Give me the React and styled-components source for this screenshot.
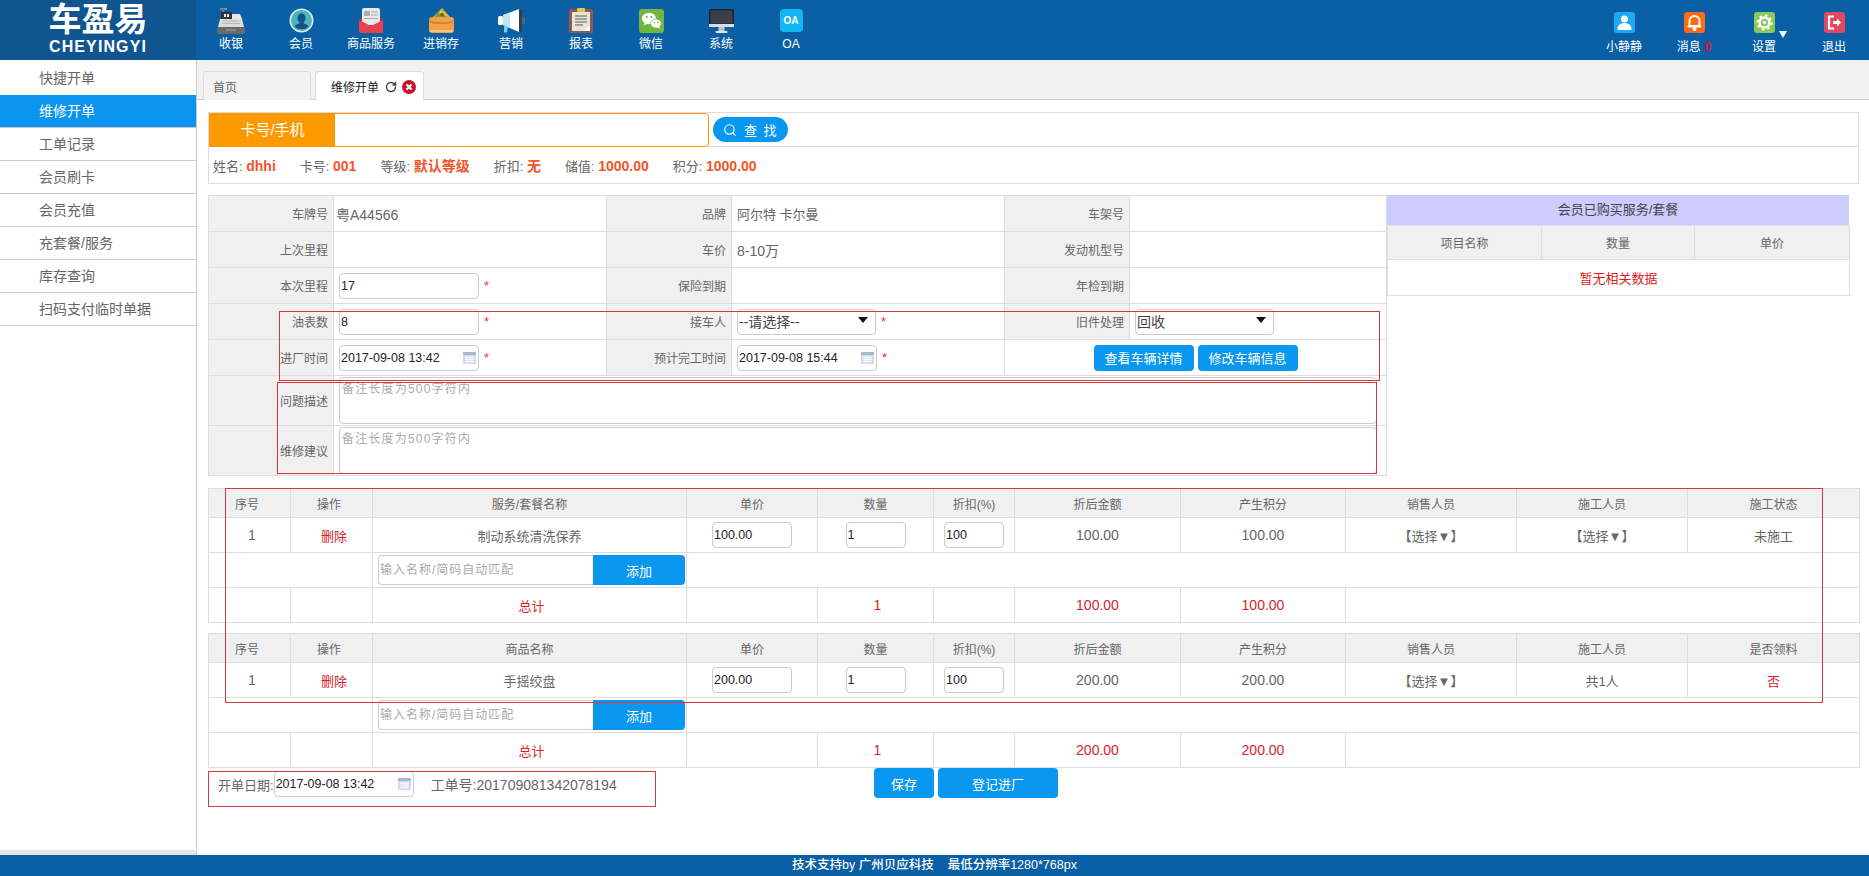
import React from 'react';
import styled, { createGlobalStyle } from 'styled-components';
import { Search, RotateCw } from 'lucide-react';

const GlobalStyle = createGlobalStyle`
  html, body { margin: 0; padding: 0; height: 100%; background: #fff; }
  body {
    font-family: "Liberation Sans", "Noto Sans CJK SC", sans-serif;
    font-size: 12px;
    color: #666;
    overflow: hidden;
  }
  input, textarea, select, button { font-family: inherit; }
`;

const Page = styled.div`
  position: relative;
  display: flex;
  flex-direction: column;
  width: 1869px;
  height: 876px;
`;

const Header = styled.header`
  display: flex;
  height: 60px;
  flex-shrink: 0;
  background: #0b5fa4;
  color: #fff;
`;

const Logo = styled.div`
  width: 196px;
  background: #10558f;
  display: flex;
  flex-direction: column;
  align-items: center;
  padding-top: 1px;
  box-sizing: border-box;
`;

const LogoCn = styled.div`
  font-size: 33px;
  line-height: 38px;
  font-weight: 700;
`;

const LogoEn = styled.div`
  font-size: 16px;
  line-height: 16px;
  font-weight: 700;
  letter-spacing: 1.1px;
`;

const Nav = styled.nav`
  display: flex;
  flex: 1;
`;

const NavItem = styled.div`
  width: 70px;
  display: flex;
  flex-direction: column;
  align-items: center;
`;

const NavIcon = styled.div`
  height: 25px;
  margin-top: 8px;
  display: flex;
  align-items: center;
  justify-content: center;
`;

const NavLabel = styled.div`
  margin-top: 3px;
  line-height: 16px;
  white-space: nowrap;
`;

const UserNav = styled.div`
  display: flex;
`;

const UserItem = styled.div`
  position: relative;
  width: 70px;
  display: flex;
  flex-direction: column;
  align-items: center;
`;

const UserIcon = styled.div`
  width: 21px;
  height: 21px;
  margin-top: 12px;
  border-radius: 3px;
  background: ${p => p.$bg};
  display: flex;
  align-items: center;
  justify-content: center;
`;

const UserLabel = styled.div`
  margin-top: 6px;
  line-height: 16px;
  white-space: nowrap;
`;

const Badge = styled.b`
  color: #e0103a;
  margin-left: 4px;
`;

const Caret = styled.span`
  position: absolute;
  left: 50px;
  top: 31px;
  width: 0;
  height: 0;
  border-left: 4px solid transparent;
  border-right: 4px solid transparent;
  border-top: 7px solid #fff;
`;

const OaIcon = styled.div`
  width: 23px;
  height: 23px;
  border-radius: 4px;
  background: #13b5f2;
  color: #fff;
  font-size: 10px;
  font-weight: 700;
  text-align: center;
  line-height: 23px;
`;

const Body = styled.div`
  display: flex;
  flex: 1;
  min-height: 0;
`;

const Sidebar = styled.aside`
  width: 197px;
  box-sizing: border-box;
  border-right: 1px solid #ccc;
  padding-top: 2px;
  display: flex;
  flex-direction: column;
  flex-shrink: 0;
`;

const SideItem = styled.div`
  height: 33px;
  box-sizing: border-box;
  padding-left: 39px;
  line-height: 32px;
  font-size: 14px;
  color: ${p => (p.$active ? '#fff' : '#666')};
  background: ${p => (p.$active ? '#0a94f0' : '#fff')};
  border-bottom: 1px solid ${p => (p.$plain ? 'transparent' : '#ccc')};
`;

const SideFoot = styled.div`
  margin-top: auto;
  height: 5px;
  background: #e6e6e6;
`;

const Main = styled.main`
  flex: 1;
  min-width: 0;
`;

const TabBar = styled.div`
  height: 40px;
  box-sizing: border-box;
  background: #f2f2f2;
  border-bottom: 1px solid #ccc;
  padding: 11px 0 0 6px;
  display: flex;
  gap: 4px;
`;

const Tab = styled.div`
  width: ${p => (p.$active ? '109px' : '108px')};
  height: ${p => (p.$active ? '30px' : '29px')};
  box-sizing: border-box;
  border: 1px solid #ddd;
  border-bottom: 0;
  border-radius: 4px 4px 0 0;
  background: ${p => (p.$active ? '#fff' : '#f2f2f2')};
  color: ${p => (p.$active ? '#222' : '#666')};
  padding-left: ${p => (p.$active ? '15px' : '9px')};
  display: flex;
  align-items: center;
`;

const TabRefresh = styled(RotateCw)`
  margin-left: 6px;
  color: #444;
`;

const TabClose = styled.svg`
  margin-left: 5px;
`;

const Content = styled.div`
  padding: 12px 10px 0 11px;
`;

const SearchRow = styled.div`
  display: flex;
  align-items: center;
  height: 35px;
  border: 1px solid #ddd;
  box-sizing: border-box;
`;

const SearchBox = styled.div`
  display: flex;
  width: 500px;
  height: 34px;
  box-sizing: border-box;
  border: 1px solid #f90;
  border-radius: 0 4px 4px 0;
`;

const SearchLabel = styled.div`
  width: 125px;
  background: #f90;
  color: #fff;
  font-size: 15px;
  text-align: center;
  line-height: 32px;
`;

const SearchInput = styled.input`
  flex: 1;
  border: 0;
  outline: none;
  background: transparent;
  min-width: 0;
`;

const SearchBtn = styled.button`
  margin-left: 4px;
  width: 75px;
  height: 25px;
  border: 0;
  border-radius: 13px;
  background: #0a97f0;
  color: #fff;
  font-size: 13px;
  letter-spacing: 1.5px;
  display: flex;
  align-items: center;
  justify-content: center;
  gap: 7px;
  padding: 0;
`;

const InfoRow = styled.div`
  display: flex;
  gap: 24px;
  height: 37px;
  box-sizing: border-box;
  align-items: center;
  padding-left: 4px;
  border: 1px solid #ddd;
  border-top: 0;
  font-size: 13px;
`;

const InfoValue = styled.b`
  color: #f0562a;
  font-size: 14px;
`;

const FormSection = styled.section`
  display: flex;
  margin-top: 11px;
  align-items: flex-start;
`;

const Table = styled.table`
  border-collapse: collapse;
  table-layout: fixed;
  width: ${p => p.$w}px;
  flex-shrink: 0;
  margin-top: ${p => p.$mt || 0}px;
  td, th { border: 1px solid #ddd; padding: 0; box-sizing: border-box; }
`;

const Col = styled.col`
  width: ${p => p.$w}px;
`;

const Row = styled.tr`
  height: ${p => p.$h}px;
`;

const LabelCell = styled.td`
  background: #f0f0f0;
  text-align: right;
  padding-right: 5px !important;
  color: #666;
`;

const ValueCell = styled.td`
  padding-left: ${p => p.$pl || 5}px !important;
  font-size: ${p => p.$fs || 13}px;
  color: #666;
`;

const ActionCell = styled.td`
  text-align: center;
`;

const Field = styled.div`
  position: relative;
  display: inline-block;
  vertical-align: middle;
`;

const TextInput = styled.input`
  width: ${p => p.$w}px;
  height: 26px;
  box-sizing: border-box;
  border: 1px solid #ccc;
  border-radius: 4px;
  padding: 0 1px;
  font-size: 12.5px;
  color: #222;
  background: #fff;
  outline: none;
  vertical-align: middle;
`;

const CalendarIcon = styled.svg`
  position: absolute;
  right: 3px;
  top: 7px;
`;

const Star = styled.span`
  color: #e33;
  margin-left: 5px;
  vertical-align: middle;
`;

const SelectBox = styled.div`
  position: relative;
  display: inline-block;
  width: 139px;
  height: 26px;
  box-sizing: border-box;
  border: 1px solid #ccc;
  border-radius: 4px;
  font-size: 14px;
  line-height: 24px;
  padding-left: 1px;
  color: #444;
  vertical-align: middle;
  &::after {
    content: '';
    position: absolute;
    right: 7px;
    top: 7px;
    border-left: 5px solid transparent;
    border-right: 5px solid transparent;
    border-top: 6px solid #111;
  }
`;

const BlueBtn = styled.button`
  width: ${p => p.$w}px;
  height: ${p => p.$h || 26}px;
  border: 0;
  border-radius: 4px;
  background: #0a97f0;
  color: #fff;
  font-size: 13px;
  padding: 0;
  & + & { margin-left: 4px; }
`;

const NoteArea = styled.textarea`
  display: block;
  width: 1038px;
  height: 47px;
  box-sizing: border-box;
  border: 1px solid #ccc;
  border-radius: 4px;
  padding: 1px 2px;
  resize: none;
  outline: none;
  font-size: 12px;
  letter-spacing: 1.2px;
  &::placeholder { color: #aaa; opacity: 1; }
`;

const SidePanel = styled.div`
  width: 462px;
`;

const PanelTitle = styled.div`
  height: 30px;
  background: #ccf;
  color: #444;
  font-size: 13px;
  line-height: 30px;
  text-align: center;
`;

const HeadCell = styled.th`
  background: #f0f0f0;
  font-weight: 400;
  color: #666;
  font-size: 12px;
  padding-right: ${p => p.$shift || 0}px !important;
`;

const Empty = styled.td`
  text-align: center;
  color: #d81e1e;
  font-size: 13px;
`;

const Cell = styled.td`
  text-align: center;
  font-size: ${p => p.$fs || 14}px;
  color: ${p => (p.$red ? '#d81e2c' : '#666')};
  padding-left: ${p => p.$shift || 0}px !important;
`;

const AddWrap = styled.div`
  display: flex;
  height: 30px;
  margin-left: 5px;
`;

const AddInput = styled.input`
  width: 215px;
  box-sizing: border-box;
  border: 1px solid #ccc;
  border-right: 0;
  border-radius: 4px 0 0 4px;
  padding: 0 1px;
  outline: none;
  font-size: 12px;
  letter-spacing: 1px;
  &::placeholder { color: #aaa; opacity: 1; }
`;

const AddBtn = styled.button`
  width: 92px;
  border: 0;
  border-radius: 0 4px 4px 0;
  background: #0a97f0;
  color: #fff;
  font-size: 13px;
  padding: 0;
`;

const BottomBar = styled.div`
  display: flex;
  align-items: flex-start;
  height: 36px;
`;

const OrderInfo = styled.div`
  width: 666px;
  display: flex;
  align-items: center;
  padding: 3px 0 0 10px;
  box-sizing: border-box;
  font-size: 13px;
  color: #666;
`;

const OrderNo = styled.span`
  margin-left: 17px;
  font-size: 14px;
`;

const Footer = styled.footer`
  height: 21px;
  flex-shrink: 0;
  background: #0b5fa4;
  color: #fff;
  text-align: center;
  line-height: 21px;
  font-size: 12.5px;
  font-weight: 500;
`;

const Mark = styled.div`
  position: absolute;
  left: ${p => p.$x}px;
  top: ${p => p.$y}px;
  width: ${p => p.$w}px;
  height: ${p => p.$h}px;
  border: 1px solid #d9383a;
  box-sizing: border-box;
  pointer-events: none;
`;

const RegisterIcon = () => (
  <svg width="28" height="26" viewBox="0 0 28 26">
    <rect x="3" y="0" width="7" height="2" fill="#8a8a8a" />
    <rect x="5" y="1" width="2" height="4" fill="#777" />
    <rect x="4" y="4" width="11" height="7" fill="#2f3338" />
    <rect x="7" y="6" width="2" height="3" fill="#eee" />
    <rect x="10" y="6" width="2" height="3" fill="#eee" />
    <path d="M15 6h8l2 5H15z" fill="#e8e8e4" />
    <path d="M3 11h22l2 8H1z" fill="#dcdcd8" />
    <path d="M6 13h16M5 15.5h18" stroke="#b8b8b4" strokeWidth="1" />
    <rect x="0" y="19" width="28" height="7" rx="2" fill="#6a6a6a" />
    <rect x="9" y="21" width="10" height="2" fill="#8a8a8a" />
  </svg>
);

const MemberIcon = () => (
  <svg width="25" height="25" viewBox="0 0 25 25">
    <circle cx="12.5" cy="12.5" r="12" fill="#d8eef0" />
    <circle cx="12.5" cy="12.5" r="10.5" fill="#4fb5bd" />
    <path d="M12.5 5.5c2.6 0 4 2 4 4.4 0 1.8-.8 3.3-1.8 4.2v1.4c2.2.8 4.3 1.6 5 3a10.5 10.5 0 0 1-14.4 0c.7-1.4 2.8-2.2 5-3v-1.4c-1-.9-1.8-2.4-1.8-4.2 0-2.4 1.4-4.4 4-4.4z" fill="#12548a" />
  </svg>
);

const GoodsIcon = () => (
  <svg width="24" height="25" viewBox="0 0 24 25">
    <rect x="3" y="0" width="18" height="17" rx="2" fill="#e9e9e9" />
    <rect x="5" y="3" width="6" height="5" fill="#9fb2bc" />
    <path d="M12 4h7M12 7h7M5 10.500h14" stroke="#a8a8a8" strokeWidth="1.2" />
    <path d="M0 12l12 6 12-6v11a2 2 0 0 1-2 2H2a2 2 0 0 1-2-2z" fill="#e8414f" />
    <path d="M0 12l3-2v3.500zM24 12l-3-2v3.500z" fill="#b82f3c" />
  </svg>
);

const StockIcon = () => (
  <svg width="27" height="25" viewBox="0 0 27 25">
    <path d="M14 0l8 9H5z" fill="#e9b233" />
    <path d="M7 9c0-4 5-7 9-6l-2 3 6 3z" fill="#7d9a2e" />
    <path d="M12 3c3 0 5 2 5 4l-6-1z" fill="#f3d35a" />
    <circle cx="14" cy="6.500" r="1.800" fill="#55652a" />
    <rect x="1" y="9" width="25" height="16" rx="3" fill="#f2a14a" />
    <path d="M1 12c6 3 19 3 25 0v2c-6 3-19 3-25 0z" fill="#e0812c" />
    <rect x="2" y="22" width="23" height="2" fill="#f7c27f" />
  </svg>
);

const HornIcon = () => (
  <svg width="27" height="24" viewBox="0 0 27 24">
    <rect x="0" y="7" width="5" height="9" rx="1.500" fill="#fff" />
    <path d="M5 6l16-6v23L5 16z" fill="#fff" />
    <path d="M5 6l7-2.600V19l-7-3z" fill="#bfe6f6" />
    <path d="M6 16l4 1.500-1 6H6z" fill="#7ccbe9" />
    <path d="M21 0h3v23h-3z" fill="#2f3f55" />
    <rect x="24" y="8" width="3" height="7" fill="#50617a" />
  </svg>
);

const ReportIcon = () => (
  <svg width="24" height="25" viewBox="0 0 24 25">
    <rect x="0" y="1" width="24" height="24" rx="1.500" fill="#8b5a50" />
    <rect x="3" y="4" width="18" height="19" fill="#e9e4d8" />
    <rect x="8" y="0" width="8" height="4" rx="1" fill="#efc24b" />
    <path d="M6 8h12M6 11h12M6 14h12M6 17h8" stroke="#8a8a84" strokeWidth="1.300" />
    <path d="M15 23l6-6v6z" fill="#fff" />
  </svg>
);

const WechatIcon = () => (
  <svg width="25" height="24" viewBox="0 0 25 24">
    <rect x="0" y="0" width="25" height="24" rx="3" fill="#72b53f" />
    <ellipse cx="10" cy="9.500" rx="7" ry="5.800" fill="#fff" />
    <path d="M6 13l-1 3.500 4-2z" fill="#fff" />
    <ellipse cx="17" cy="14.500" rx="5.300" ry="4.500" fill="#fff" stroke="#72b53f" strokeWidth=".7" />
    <path d="M20 17.500l1.500 2.500-3.500-1.500z" fill="#fff" />
    <circle cx="7.800" cy="8" r="1" fill="#72b53f" />
    <circle cx="12.200" cy="8" r="1" fill="#72b53f" />
    <circle cx="15.200" cy="13.500" r=".8" fill="#72b53f" />
    <circle cx="18.800" cy="13.500" r=".8" fill="#72b53f" />
  </svg>
);

const MonitorIcon = () => (
  <svg width="25" height="24" viewBox="0 0 25 24">
    <rect x="0" y="0" width="25" height="18" rx="1.500" fill="#1e2430" />
    <rect x="1.500" y="1.500" width="22" height="13" fill="#3a3f4a" />
    <rect x="0" y="15" width="25" height="3" fill="#d9dde2" />
    <rect x="9.500" y="18" width="6" height="4" fill="#c2c6cc" />
    <rect x="6.500" y="22" width="12" height="2" rx="1" fill="#e4e7ea" />
  </svg>
);

const UserGlyph = () => (
  <svg width="15" height="15" viewBox="0 0 15 15" fill="#fff">
    <circle cx="7.500" cy="4" r="3.500" />
    <path d="M0.500 14c0-3.800 3-6 7-6s7 2.200 7 6c0 .6-.4 1-1 1h-12c-.6 0-1-.4-1-1z" />
  </svg>
);

const BellGlyph = () => (
  <svg width="15" height="17" viewBox="0 0 15 17">
    <path d="M2.500 12V7a5 5 0 0 1 10 0v5z" fill="none" stroke="#fff" strokeWidth="2" />
    <rect x="0.500" y="11.500" width="14" height="2" rx="1" fill="#fff" />
    <circle cx="7.500" cy="15" r="2" fill="#fff" />
  </svg>
);

const GearGlyph = () => (
  <svg width="17" height="17" viewBox="0 0 17 17">
    <circle cx="8.500" cy="8.500" r="5" fill="none" stroke="#fff" strokeWidth="2.400" />
    <circle cx="8.500" cy="8.500" r="7" fill="none" stroke="#fff" strokeWidth="2" strokeDasharray="2.500 3" />
    <circle cx="8.500" cy="8.500" r="1.800" fill="#fff" />
  </svg>
);

const ExitGlyph = () => (
  <svg width="15" height="15" viewBox="0 0 15 15" fill="none">
    <path d="M7 1.500H2v12h5" stroke="#fff" strokeWidth="2.200" />
    <path d="M6 6h4V3.500l4 4-4 4V9H6z" fill="#fff" />
  </svg>
);

const CalendarGlyph = () => (
  <CalendarIcon width="13" height="12" viewBox="0 0 13 12">
    <rect x="0" y="0" width="13" height="12" fill="#d3dcea" />
    <rect x="0" y="0" width="13" height="3" fill="#a5b8d3" />
    <path d="M2 5.500h9M2 7.500h9M2 9.500h9M4 4v7M6.500 4v7M9 4v7" stroke="#fff" strokeWidth=".8" />
  </CalendarIcon>
);

const DateField = ({ value }) => (
  <Field>
    <TextInput $w={140} defaultValue={value} />
    <CalendarGlyph />
  </Field>
);

const navItems = [
  ['收银', <RegisterIcon />],
  ['会员', <MemberIcon />],
  ['商品服务', <GoodsIcon />],
  ['进销存', <StockIcon />],
  ['营销', <HornIcon />],
  ['报表', <ReportIcon />],
  ['微信', <WechatIcon />],
  ['系统', <MonitorIcon />],
  ['OA', <OaIcon>OA</OaIcon>],
];

const sideItems = ['快捷开单', '维修开单', '工单记录', '会员刷卡', '会员充值', '充套餐/服务', '库存查询', '扫码支付临时单据'];

const infoItems = [
  ['姓名', 'dhhi'],
  ['卡号', '001'],
  ['等级', '默认等级'],
  ['折扣', '无'],
  ['储值', '1000.00'],
  ['积分', '1000.00'],
];

const lineCols = [82, 82, 314, 131, 116, 81, 166, 165, 171, 171, 172];

const LineCols = () => (
  <colgroup>
    {lineCols.map((w, i) => <Col key={i} $w={w} />)}
  </colgroup>
);

const LineTable = ({ nameTitle, lastTitle, name, price, amount, worker, last, lastRed, mt }) => (
  <Table $w={1651} $mt={mt}>
    <LineCols />
    <tbody>
      <Row $h={29}>
        <HeadCell $shift={5}>序号</HeadCell>
        <HeadCell $shift={5}>操作</HeadCell>
        {[nameTitle, '单价', '数量', '折扣(%)', '折后金额', '产生积分', '销售人员', '施工人员', lastTitle].map(t => (
          <HeadCell key={t}>{t}</HeadCell>
        ))}
      </Row>
      <Row $h={35}>
        <Cell $shift={5}>1</Cell>
        <Cell $red $fs={13} $shift={5}>删除</Cell>
        <Cell $fs={13}>{name}</Cell>
        <Cell><TextInput $w={80} defaultValue={price} /></Cell>
        <Cell><TextInput $w={60} defaultValue="1" /></Cell>
        <Cell><TextInput $w={60} defaultValue="100" /></Cell>
        <Cell>{amount}</Cell>
        <Cell>{amount}</Cell>
        <Cell $fs={13}>【选择▼】</Cell>
        <Cell $fs={13}>{worker}</Cell>
        <Cell $fs={13} $red={lastRed}>{last}</Cell>
      </Row>
      <Row $h={35}>
        <Cell colSpan={2} />
        <Cell>
          <AddWrap>
            <AddInput placeholder="输入名称/简码自动匹配" />
            <AddBtn>添加</AddBtn>
          </AddWrap>
        </Cell>
        <Cell colSpan={8} />
      </Row>
      <Row $h={35}>
        <Cell />
        <Cell />
        <Cell $red $fs={13} $shift={4}>总计</Cell>
        <Cell />
        <Cell $red $shift={4}>1</Cell>
        <Cell />
        <Cell $red>{amount}</Cell>
        <Cell $red>{amount}</Cell>
        <Cell colSpan={3} />
      </Row>
    </tbody>
  </Table>
);

export default function App() {
  return (
    <Page>
      <GlobalStyle />
      <Header>
        <Logo>
          <LogoCn>车盈易</LogoCn>
          <LogoEn>CHEYINGYI</LogoEn>
        </Logo>
        <Nav>
          {navItems.map(([label, icon]) => (
            <NavItem key={label}>
              <NavIcon>{icon}</NavIcon>
              <NavLabel>{label}</NavLabel>
            </NavItem>
          ))}
        </Nav>
        <UserNav>
          <UserItem>
            <UserIcon $bg="#1ea9f5"><UserGlyph /></UserIcon>
            <UserLabel>小静静</UserLabel>
          </UserItem>
          <UserItem>
            <UserIcon $bg="#ff6a13"><BellGlyph /></UserIcon>
            <UserLabel>消息<Badge>0</Badge></UserLabel>
          </UserItem>
          <UserItem>
            <UserIcon $bg="#8cc85a"><GearGlyph /></UserIcon>
            <Caret />
            <UserLabel>设置</UserLabel>
          </UserItem>
          <UserItem>
            <UserIcon $bg="#e0495e"><ExitGlyph /></UserIcon>
            <UserLabel>退出</UserLabel>
          </UserItem>
        </UserNav>
      </Header>

      <Body>
        <Sidebar>
          {sideItems.map((s, i) => (
            <SideItem key={s} $active={i === 1} $plain={i === 0}>{s}</SideItem>
          ))}
          <SideFoot />
        </Sidebar>

        <Main>
          <TabBar>
            <Tab>首页</Tab>
            <Tab $active>
              维修开单
              <TabRefresh size={12} strokeWidth={3} />
              <TabClose width="14" height="14" viewBox="0 0 14 14">
                <circle cx="7" cy="7" r="7" fill="#c4122f" />
                <path d="M4.500 4.500l5 5M9.500 4.500l-5 5" stroke="#fff" strokeWidth="2.200" />
              </TabClose>
            </Tab>
          </TabBar>

          <Content>
            <SearchRow>
              <SearchBox>
                <SearchLabel>卡号/手机</SearchLabel>
                <SearchInput />
              </SearchBox>
              <SearchBtn><Search size={14} />查 找</SearchBtn>
            </SearchRow>
            <InfoRow>
              {infoItems.map(([k, v]) => (
                <span key={k}>{k}: <InfoValue>{v}</InfoValue></span>
              ))}
            </InfoRow>

            <FormSection>
              <Table $w={1178}>
                <colgroup>
                  <Col $w={125} /><Col $w={273} /><Col $w={125} /><Col $w={273} /><Col $w={125} /><Col $w={257} />
                </colgroup>
                <tbody>
                  <Row $h={36}>
                    <LabelCell>车牌号</LabelCell><ValueCell $pl={2} $fs={14}>粤A44566</ValueCell>
                    <LabelCell>品牌</LabelCell><ValueCell>阿尔特 卡尔曼</ValueCell>
                    <LabelCell>车架号</LabelCell><ValueCell />
                  </Row>
                  <Row $h={36}>
                    <LabelCell>上次里程</LabelCell><ValueCell />
                    <LabelCell>车价</LabelCell><ValueCell $fs={14}>8-10万</ValueCell>
                    <LabelCell>发动机型号</LabelCell><ValueCell />
                  </Row>
                  <Row $h={36}>
                    <LabelCell>本次里程</LabelCell>
                    <ValueCell><TextInput $w={140} defaultValue="17" /><Star>*</Star></ValueCell>
                    <LabelCell>保险到期</LabelCell><ValueCell />
                    <LabelCell>年检到期</LabelCell><ValueCell />
                  </Row>
                  <Row $h={36}>
                    <LabelCell>油表数</LabelCell>
                    <ValueCell><TextInput $w={140} defaultValue="8" /><Star>*</Star></ValueCell>
                    <LabelCell>接车人</LabelCell>
                    <ValueCell><SelectBox>--请选择--</SelectBox><Star>*</Star></ValueCell>
                    <LabelCell>旧件处理</LabelCell>
                    <ValueCell><SelectBox>回收</SelectBox></ValueCell>
                  </Row>
                  <Row $h={36}>
                    <LabelCell>进厂时间</LabelCell>
                    <ValueCell><DateField value="2017-09-08 13:42" /><Star>*</Star></ValueCell>
                    <LabelCell>预计完工时间</LabelCell>
                    <ValueCell><DateField value="2017-09-08 15:44" /><Star>*</Star></ValueCell>
                    <ActionCell colSpan={2}>
                      <BlueBtn $w={100}>查看车辆详情</BlueBtn>
                      <BlueBtn $w={100}>修改车辆信息</BlueBtn>
                    </ActionCell>
                  </Row>
                  <Row $h={50}>
                    <LabelCell>问题描述</LabelCell>
                    <ValueCell colSpan={5}><NoteArea placeholder="备注长度为500字符内" /></ValueCell>
                  </Row>
                  <Row $h={50}>
                    <LabelCell>维修建议</LabelCell>
                    <ValueCell colSpan={5}><NoteArea placeholder="备注长度为500字符内" /></ValueCell>
                  </Row>
                </tbody>
              </Table>

              <SidePanel>
                <PanelTitle>会员已购买服务/套餐</PanelTitle>
                <Table $w={462}>
                  <colgroup>
                    <Col $w={154} /><Col $w={153} /><Col $w={155} />
                  </colgroup>
                  <tbody>
                    <Row $h={34}>
                      <HeadCell>项目名称</HeadCell><HeadCell>数量</HeadCell><HeadCell>单价</HeadCell>
                    </Row>
                    <Row $h={36}>
                      <Empty colSpan={3}>暂无相关数据</Empty>
                    </Row>
                  </tbody>
                </Table>
              </SidePanel>
            </FormSection>

            <LineTable
              mt={12}
              nameTitle="服务/套餐名称"
              lastTitle="施工状态"
              name="制动系统清洗保养"
              price="100.00"
              amount="100.00"
              worker="【选择▼】"
              last="未施工"
            />
            <LineTable
              mt={10}
              nameTitle="商品名称"
              lastTitle="是否领料"
              name="手摇绞盘"
              price="200.00"
              amount="200.00"
              worker="共1人"
              last="否"
              lastRed
            />

            <BottomBar>
              <OrderInfo>
                开单日期:
                <DateField value="2017-09-08 13:42" />
                <OrderNo>工单号:201709081342078194</OrderNo>
              </OrderInfo>
              <BlueBtn $w={60} $h={30}>保存</BlueBtn>
              <BlueBtn $w={120} $h={30}>登记进厂</BlueBtn>
            </BottomBar>
          </Content>
        </Main>
      </Body>

      <Footer>技术支持by 广州贝应科技&nbsp;&nbsp;&nbsp;&nbsp;最低分辨率1280*768px</Footer>

      <Mark $x={279} $y={311} $w={1101} $h={70} />
      <Mark $x={277} $y={382} $w={1100} $h={92} />
      <Mark $x={225} $y={488} $w={1598} $h={215} />
      <Mark $x={208} $y={771} $w={448} $h={36} />
    </Page>
  );
}
